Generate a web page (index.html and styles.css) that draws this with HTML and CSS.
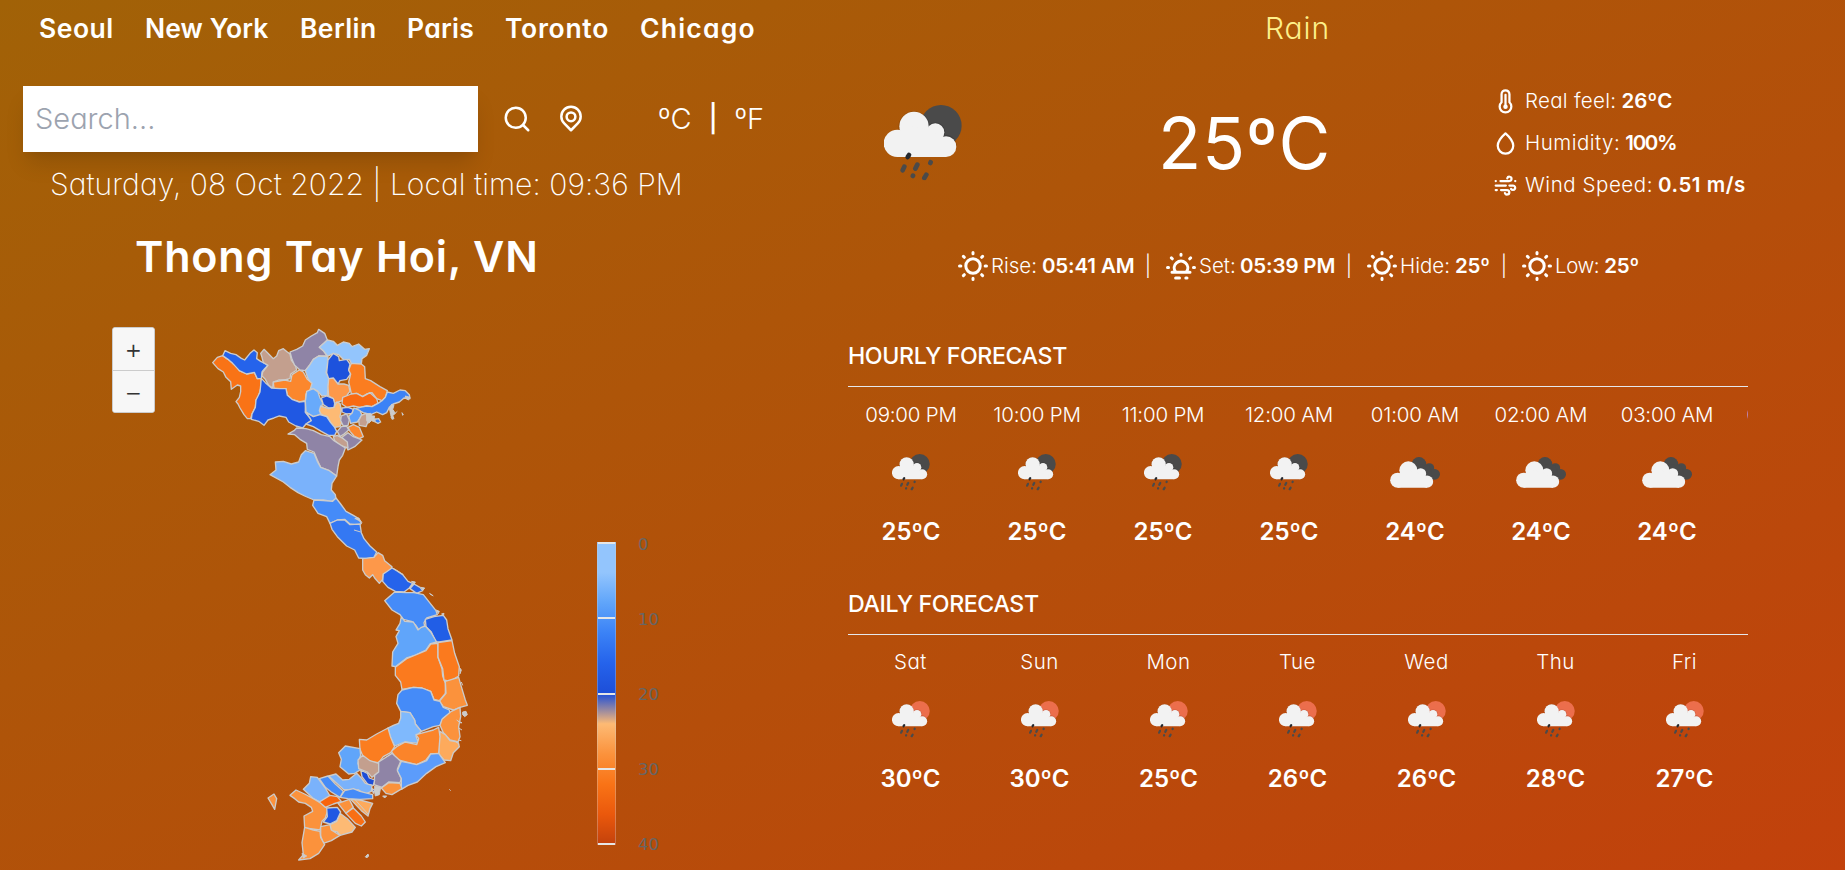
FILE: index.html
```html
<!DOCTYPE html>
<html lang="en">
<head>
<meta charset="utf-8">
<title>Weather</title>
<link rel="stylesheet" href="styles.css">
</head>
<body>
<svg class="defs" aria-hidden="true">
  <symbol id="rain" viewBox="132 76 234 226">
    <circle class="disc" cx="303" cy="138" r="62"/>
    <g class="cloud-edge"><circle cx="222" cy="142" r="47"/><circle cx="286" cy="158" r="30"/><path d="M286 232V185L318 165a35 35 0 0 1 33 35Z"/></g>
    <g class="cloud"><circle cx="172" cy="191" r="41"/><circle cx="222" cy="140" r="44"/><circle cx="286" cy="158" r="27"/><circle cx="318" cy="201" r="31"/><path d="M172 232V160l50-20 64 20 32 40v32Z"/></g>
    <g class="drops"><path d="M203 232l4-6" stroke="#26292e"/><path d="M188 272l5-11M226 267l6-12M218.500 289l.5-1M271 250l1-2M253 295l6-10"/></g>
  </symbol>
  <symbol id="clouds" viewBox="150 380 150 93">
    <g class="dark"><circle cx="237" cy="402" r="22"/><circle cx="268" cy="413" r="14.500"/><circle cx="284" cy="432" r="16"/><path d="M237 402l31 4 12 42h-20l-30-20Z"/></g>
    <g class="cloud"><circle cx="173" cy="449.500" r="22.500"/><circle cx="205" cy="420" r="27"/><circle cx="242" cy="430" r="16.500"/><circle cx="261" cy="454" r="18.500"/><path d="M173 472V435l32-15 37 10 19 24v18Z"/></g>
  </symbol>
  <symbol id="sun" viewBox="0 0 24 24"><g class="line"><circle cx="12" cy="12" r="4.800"/><path d="M12 3v.9M12 20.100v.9M3 12h.9M20.100 12h.9M5.600 5.600l.6.6M17.800 17.800l.6.6M5.600 18.400l.6-.6M17.800 6.200l.6-.6"/></g></symbol>
  <symbol id="sunset" viewBox="0 0 24 24"><g class="line"><path d="M12 4.100v.7M3 13h.7M20.300 13h.7M5.600 6.600l.6.6M18.400 6.600l-.6.6M6 16.200h12M8.300 15.800a4.500 4.500 0 1 1 7.400 0M8.400 20h2.600M15.200 20h.8"/></g></symbol>
</svg>

<main class="page">
  <section class="left">
    <nav class="cities">
      <a class="city seoul">Seoul</a><a class="city york">New York</a><a class="city berlin">Berlin</a><a class="city paris">Paris</a><a class="city toronto">Toronto</a><a class="city chicago">Chicago</a>
    </nav>
    <div class="search-row">
      <div class="search">Search...</div>
      <svg class="tool" viewBox="0 0 24 24"><g class="line"><circle cx="11" cy="11" r="8"/><path d="M17 17l4 4"/></g></svg>
      <svg class="tool" viewBox="0 0 24 24"><g class="line"><path d="M6.600 15.500a7.750 7.750 0 1 1 10.800 0L12 21Z"/><circle cx="12" cy="10.200" r="3.500"/></g></svg>
      <div class="units"><span>ºC</span><span class="bar">|</span><span>ºF</span></div>
    </div>
    <p class="date">Saturday, 08 Oct 2022 | Local time: 09:36 PM</p>
    <h1 class="place">Thong Tay Hoi, VN</h1>

    <div class="chart">
      <div class="zoom"><button>+</button><button>−</button></div>
      <svg class="map" viewBox="200 320 280 550">
        <g transform="translate(200 320) scale(.33333)">
          <path fill="#f97316" d="M38 128 52 112 68 107 84 118 98 130 112 140 118 152 140 162 163 157 172 176 184 175 182 205 176 228 168 240 166 262 156 282 152 296 142 296 132 284 120 264 114 252 108 245 118 232 122 215 122 198 112 195 94 208 92 185 78 172 70 156 54 146Z"/>
          <path fill="#2563eb" d="M68 107 75 92 92 100 108 104 124 115 134 120 150 100 162 90 172 98 170 116 182 124 198 132 204 136 194 146 186 156 184 175 172 176 163 157 140 162 118 152 98 130 84 118Z"/>
          <path fill="#c39f8e" d="M182 100 192 88 204 100 220 116 230 108 236 92 250 86 262 96 270 102 274 120 286 136 290 150 272 162 270 176 254 180 236 180 220 186 218 204 206 196 196 178 186 168 188 156 204 136 190 128 186 112Z"/>
          <path fill="#8f84a6" d="M270 96 290 88 308 78 316 60 334 48 352 38 356 28 374 40 382 60 372 70 358 82 370 92 382 108 356 108 340 118 330 134 316 152 300 150 284 136 276 118Z"/>
          <path fill="#93c5fd" d="M358 82 382 60 400 64 412 76 430 66 448 70 456 80 476 72 494 88 508 86 500 106 486 116 484 132 454 130 448 118 432 120 416 104 400 100 388 106 382 108 370 92Z"/>
          <path fill="#93c5fd" d="M316 152 330 134 340 118 356 108 384 110 382 140 378 158 388 176 384 200 382 226 366 228 352 212 330 206 334 190 324 176Z"/>
          <path fill="#1d52dd" d="M382 140 384 120 400 100 416 110 418 122 440 118 450 132 446 150 452 162 440 178 420 182 414 192 400 180 386 176 380 158Z"/>
          <path fill="#fb7d20" d="M454 130 484 132 494 140 496 176 512 182 540 200 562 212 556 232 546 242 530 236 516 218 500 222 488 230 470 220 454 222 450 202 446 186 452 162 446 150Z"/>
          <path fill="#fb872d" d="M220 186 254 180 272 184 276 164 298 150 310 156 322 178 336 190 330 210 318 222 316 242 298 246 276 238 262 226 258 206 240 206 222 206Z"/>
          <path fill="#fd984a" d="M386 176 400 174 414 192 432 192 446 196 450 214 442 224 436 240 420 244 404 250 400 236 386 228 384 200Z"/>
          <path fill="#f96a12" d="M428 232 454 222 470 220 488 230 510 218 530 236 534 250 516 260 500 258 480 262 460 258 440 262 426 252Z"/>
          <path fill="#3b82f6" d="M562 216 580 220 600 210 616 212 628 224 630 236 612 234 598 246 580 252 568 262 560 278 548 284 530 276 512 284 490 278 466 266 480 262 500 258 516 260 534 250 546 242 556 232Z"/>
          <path fill="#2058e3" d="M184 175 196 188 214 204 240 206 258 206 262 226 276 238 298 246 316 244 316 276 330 294 334 302 318 312 308 324 288 318 266 306 258 292 238 288 222 294 204 300 192 316 176 304 154 298 156 282 166 262 168 240 180 216Z"/>
          <path fill="#68aafb" d="M320 214 340 206 354 216 360 234 368 248 364 268 360 284 340 290 318 276 316 244Z"/>
          <path fill="#1d4ed8" d="M364 234 380 228 400 236 404 250 402 264 386 264 370 254Z"/>
          <path fill="#fdba74" d="M362 258 386 266 402 262 410 246 420 250 424 270 420 290 426 306 420 320 404 322 392 308 382 290 364 284 358 272Z"/>
          <path fill="#2563eb" d="M318 312 334 302 330 294 316 276 340 290 360 284 380 290 392 308 404 322 410 334 404 346 386 346 364 334 340 320Z"/>
          <path fill="#1d4ed8" d="M426 264 444 262 460 268 456 280 440 282 426 276Z"/>
          <path fill="#5c9ffb" d="M446 288 456 280 462 264 480 272 486 286 472 306 452 310Z"/>
          <path fill="#8f84a6" d="M424 288 440 282 448 300 444 316 430 318 422 302Z"/>
          <path fill="#c39f8e" d="M484 286 498 280 506 300 498 320 478 316 476 302Z"/>
          <path fill="#fb872d" d="M444 322 460 314 478 322 490 350 478 356 462 348 450 334Z"/>
          <path fill="#8f84a6" d="M412 334 424 320 440 318 446 330 432 342 420 350ZM426 352 444 338 460 350 486 360 464 380 444 390 436 370Z"/>
          <path fill="#c39f8e" d="M400 350 412 346 430 356 442 366 444 384 420 376 404 362Z"/>
          <path fill="#8f84a6" d="M264 342 282 332 290 324 318 326 340 332 364 344 390 350 402 362 436 384 428 406 418 420 414 440 410 468 388 452 362 442 352 420 342 396 322 388 320 370 300 358 284 344Z"/>
          <path class="isle" d="M500 282l12-2 4 8 8 0-2 8 10 2-6 8-12-4-8 8-6-8ZM568 264l8-12 6 4-4 12 8 12-8 6 4 10-6 2-4-14ZM606 278l4 6-2 2ZM616 228l14 4-4 8-8-4ZM572 292l20-18"/>
          <path fill="#3b82f6" d="M524 298l12-2 6 10-8 4-8-4Z"/>
        </g>
        <g transform="translate(250 440) scale(.33333)">
          <path fill="#7ab2fb" d="M60 104 78 90 76 66 100 64 124 72 146 66 154 44 166 32 192 40 202 64 212 82 238 92 260 108 246 130 244 150 256 164 258 178 244 184 220 180 192 180 164 168 144 158 120 142 100 126Z"/>
          <path fill="#458bf8" d="M192 180 220 182 248 184 258 174 272 192 288 214 310 226 326 236 334 250 328 256 300 252 284 238 262 240 240 250 230 230 204 220 188 196Z"/>
          <path fill="#3478f3" d="M240 250 262 240 284 240 300 254 330 252 334 278 342 296 360 318 380 336 372 352 350 356 326 354 314 330 290 318 262 290 246 268Z"/>
          <path fill="#fd984a" d="M338 356 372 352 384 338 398 346 404 362 426 380 420 396 400 402 398 418 388 430 374 414 368 404 358 414 346 404 338 390Z"/>
          <path fill="#2563eb" d="M398 424 400 402 426 384 440 392 458 404 474 424 488 430 478 444 462 456 436 454 414 442ZM480 446 492 432 510 442 518 452 500 460Z"/>
          <path fill="#458bf8" d="M404 482 434 456 470 458 492 458 520 464 536 484 558 512 562 524 530 534 522 548 524 560 508 572 496 554 484 544 460 538 450 524 426 510Z"/>
          <path class="isle" d="M312 270l20 6M314 236l12-2 10 14M428 384l32 20M484 424l12 2-4 8M512 442l12 2-6 8M540 462l10 6M558 510l10 4-4 8M574 522l8-2-2 8"/>
        </g>
        <g transform="translate(360 570) scale(.33333)">
          <path fill="#215ee6" d="M196 148 222 140 250 136 260 150 264 176 276 210 238 216 228 216 214 186 198 170Z"/>
          <path fill="#60a5fa" d="M124 140 134 154 160 156 174 180 184 172 196 168 212 186 230 216 210 222 198 240 166 256 140 264 106 290 96 288 98 246 114 220 108 200 118 182 108 180 120 160Z"/>
          <path fill="#fb7a1e" d="M106 292 140 266 198 242 212 222 234 220 234 262 246 296 248 318 256 340 256 370 238 392 222 388 212 364 186 354 160 352 126 358 122 336 106 316Z"/>
          <path fill="#fb7a1e" d="M234 218 276 212 284 250 298 290 296 318 270 334 252 330 248 296 234 262Z"/>
          <path fill="#fb923c" d="M256 334 296 322 304 350 316 390 322 406 300 412 280 420 250 410 238 394 258 370Z"/>
          <path fill="#458bf8" d="M126 360 160 352 186 354 212 364 222 390 240 394 250 412 268 420 270 430 250 444 240 466 220 470 184 484 166 462 164 450 150 428 122 424 110 400 114 374Z"/>
          <path fill="#fb923c" d="M274 424 300 412 302 440 296 470 300 500 294 516 270 510 250 488 240 466 246 448Z"/>
          <path fill="#7fb9fd" d="M122 424 150 428 164 450 166 462 184 484 168 498 176 520 154 518 134 516 104 528 90 500 84 474 100 466 116 460 122 444Z"/>
          <path fill="#fdaa5c" d="M240 484 256 494 270 512 294 516 298 530 280 548 272 572 252 570 236 552 236 520Z"/>
          <path class="isle" d="M208 70l10 6M298 292l6 8-4 12M304 336l4 10M308 426l10-2 4 10-8 6-6-6ZM294 454l12 4M296 474l10 6M288 516l10 6"/>
        </g>
        <g transform="translate(260 720) scale(.33333)">
          <path fill="#fb842a" d="M394 94 410 80 436 66 470 74 476 56 468 44 520 30 536 22 540 50 536 100 512 102 498 120 470 134 432 124 410 118Z"/>
          <path fill="#fb7d20" d="M298 58 320 60 350 42 384 24 392 52 404 80 392 98 370 110 356 128 334 126 310 112 300 88Z"/>
          <path fill="#60a5fa" d="M236 98 256 78 300 86 302 106 294 130 300 150 284 160 266 162 240 140 244 118Z"/>
          <path fill="#c39f8e" d="M294 120 308 106 330 122 356 130 356 156 336 172 322 156 296 146Z"/>
          <path fill="#8f84a6" d="M356 126 396 100 422 124 412 148 424 176 420 188 386 186 366 202 342 194 344 166 356 156Z"/>
          <path fill="#5c9cfb" d="M424 124 470 134 500 122 512 102 536 100 556 128 528 140 500 160 472 186 444 196 424 208 424 176 412 152Z"/>
          <path fill="#fb923c" d="M364 204 386 188 420 190 426 206 396 224 378 220Z"/>
          <path fill="#1d4ed8" d="M302 150 322 160 328 174 344 180 340 196 324 194 306 170ZM336 206 344 210 340 220Z"/>
          <path fill="#7ab2fb" d="M206 168 228 162 248 180 268 178 290 160 304 174 316 190 336 196 334 214 316 222 296 210 276 210 250 208 226 186Z"/>
          <path fill="#458bf8" d="M240 232 254 212 280 206 300 214 338 224 338 236 300 238 264 236Z"/>
          <path fill="#458bf8" d="M178 176 204 168 226 192 250 214 240 232 214 216 196 202Z"/>
          <path fill="#7ab2fb" d="M130 208 148 190 152 170 172 172 196 204 210 228 180 246 160 236 148 224Z"/>
          <path fill="#fb923c" d="M90 226 108 210 134 222 160 236 184 250 204 268 196 294 186 304 180 330 134 324 132 288 158 274 154 262 136 250 116 246 104 236Z"/>
          <path fill="#f9640c" d="M178 246 210 226 232 230 244 244 220 252 196 262Z"/>
          <path fill="#fb923c" d="M234 250 268 238 280 262 258 280Z"/>
          <path fill="#fdaa5c" d="M272 238 300 240 338 250 330 266 324 288 304 272Z"/>
          <path fill="#f96f15" d="M258 280 280 264 304 288 316 306 304 318 286 310Z"/>
          <path fill="#fdba74" d="M240 280 262 296 286 322 276 336 240 346 232 336 212 332 210 314 230 304Z"/>
          <path fill="#2058e3" d="M200 264 232 262 242 276 230 302 210 312 190 306 202 290Z"/>
          <path fill="#fb923c" d="M182 320 210 314 214 330 240 346 214 362 190 370 182 348Z"/>
          <path fill="#fb923c" d="M134 322 160 330 180 334 182 352 194 374 176 400 150 416 116 420 130 404 126 368Z"/>
          <path fill="#fb923c" d="M24 234 42 222 50 236 44 268 36 254Z"/>
          <path class="isle" d="M344 198l18 4-4 22-12 4-2-12ZM368 228l12 0-6 6ZM568 208l4 4M316 410l8-8 2 6-6 6ZM286 240l38 42M126 400l14 8-10 6ZM590 0l14 10M594 60l10 2"/>
        </g>
      </svg>
      <div class="legend">
        <div class="scale"><i></i><i></i><i></i><i></i><i></i></div>
        <div class="labels"><span>0</span><span>10</span><span>20</span><span>30</span><span>40</span></div>
      </div>
    </div>
  </section>

  <section class="right">
    <p class="condition">Rain</p>
    <div class="now">
      <div class="now-icon"><svg class="big"><use href="#rain"/></svg></div>
      <p class="temp">25ºC</p>
      <ul class="details">
        <li><svg class="mini" viewBox="0 0 24 24"><g class="line"><path d="M15.500 12.700V5.500a3.500 3.500 0 0 0-7 0v7.200a5.200 5.200 0 1 0 7 0Z"/><path d="M12 6v10"/><circle cx="12" cy="16.700" r="1"/></g></svg><span class="real">Real feel:</span><b class="real-v">26ºC</b></li>
        <li><svg class="mini" viewBox="0 0 24 24"><g class="line"><path d="M12 3S5.100 9 5.100 14.100a6.900 6.900 0 0 0 13.800 0C18.900 9 12 3 12 3Z"/></g></svg><span class="hum">Humidity:</span><b class="hum-v">100%</b></li>
        <li><svg class="mini" viewBox="0 0 24 24"><g class="line"><path d="M7.500 8h8a1.900 1.900 0 1 0-1.900-2.400M3.300 8h.1M20.600 8h.1M3.300 12h9M15.500 12h3.200a2 2 0 1 1-1.800 3M3.300 16h1M8 16h5.400a2 2 0 1 1-1.900 2.700"/></g></svg><span class="wind">Wind Speed:</span><b class="wind-v">0.51 m/s</b></li>
      </ul>
    </div>
    <div class="sunline">
      <svg><use href="#sun"/></svg><span class="w-rise">Rise:</span><b class="w-time">05:41 AM</b><em>|</em>
      <svg><use href="#sunset"/></svg><span class="w-set">Set:</span><b class="w-time2">05:39 PM</b><em>|</em>
      <svg><use href="#sun"/></svg><span class="w-hide">Hide:</span><b class="w-deg">25º</b><em>|</em>
      <svg><use href="#sun"/></svg><span class="w-low">Low:</span><b>25º</b>
    </div>

    <h2>HOURLY FORECAST</h2>
    <div class="hours">
      <div class="slot"><span>09:00 PM</span><svg class="small"><use href="#rain"/></svg><b>25ºC</b></div>
      <div class="slot"><span>10:00 PM</span><svg class="small"><use href="#rain"/></svg><b>25ºC</b></div>
      <div class="slot"><span>11:00 PM</span><svg class="small"><use href="#rain"/></svg><b>25ºC</b></div>
      <div class="slot"><span>12:00 AM</span><svg class="small"><use href="#rain"/></svg><b>25ºC</b></div>
      <div class="slot"><span>01:00 AM</span><svg class="overcast"><use href="#clouds"/></svg><b>24ºC</b></div>
      <div class="slot"><span>02:00 AM</span><svg class="overcast"><use href="#clouds"/></svg><b>24ºC</b></div>
      <div class="slot"><span>03:00 AM</span><svg class="overcast"><use href="#clouds"/></svg><b>24ºC</b></div>
      <div class="slot"><span>04:00 AM</span></div>
    </div>
    <h2 class="second">DAILY FORECAST</h2>
    <div class="days">
      <div class="slot"><span>Sat</span><svg class="small"><use href="#rain"/></svg><b>30ºC</b></div>
      <div class="slot"><span>Sun</span><svg class="small"><use href="#rain"/></svg><b>30ºC</b></div>
      <div class="slot"><span>Mon</span><svg class="small"><use href="#rain"/></svg><b>25ºC</b></div>
      <div class="slot"><span>Tue</span><svg class="small"><use href="#rain"/></svg><b>26ºC</b></div>
      <div class="slot"><span>Wed</span><svg class="small"><use href="#rain"/></svg><b>26ºC</b></div>
      <div class="slot"><span>Thu</span><svg class="small"><use href="#rain"/></svg><b>28ºC</b></div>
      <div class="slot"><span>Fri</span><svg class="small"><use href="#rain"/></svg><b>27ºC</b></div>
    </div>
  </section>
</main>
</body>
</html>
```
FILE: styles.css
```css
* { box-sizing: border-box; margin: 0; padding: 0; }
body {
  height: 870px;
  overflow: hidden;
  background: linear-gradient(to bottom right, #a16207, #c2410c);
  color: #fff;
  font: 330 20.5px/30px Inter, "Noto Sans", sans-serif;
  font-feature-settings: "cv11";
  white-space: nowrap;
}
b { font-weight: 570; }
svg { flex: none; display: block; }
.defs { width: 0; height: 0; position: absolute; }
.line { fill: none; stroke: currentColor; stroke-width: 2; stroke-linecap: round; stroke-linejoin: round; }
.cloud { fill: #f2f2f2; }
.cloud-edge { fill: #000; opacity: .13; }
.dark { fill: #4a4a4a; }
.disc { fill: var(--disc, #4a4a4a); }
.drops { stroke: #4a4a4a; stroke-width: 14; stroke-linecap: round; fill: none; }

.page { display: flex; height: 870px; }
.left { width: 848px; }
.right { width: 900px; }

/* left column */
.cities {
  display: grid;
  grid-template-columns: 106px 155px 107px 98px 135px auto;
  padding: 10px 0 0 39px;
  font-size: 26.5px;
  font-weight: 570;
  line-height: 36px;
}
.seoul { letter-spacing: .5px; }
.york { letter-spacing: .1px; }
.berlin { letter-spacing: .4px; }
.paris { letter-spacing: .3px; }
.toronto { letter-spacing: .7px; }
.chicago { letter-spacing: 1.2px; }

.search-row { display: flex; align-items: center; height: 66px; margin-top: 40px; padding-left: 23px; }
.search {
  width: 455px;
  height: 66px;
  padding-left: 12px;
  background: #fff;
  color: #9ca3af;
  font-size: 29px;
  line-height: 65px;
  box-shadow: 0 15px 22px -4px rgba(0, 0, 0, .13), 0 6px 9px -6px rgba(0, 0, 0, .1);
}
.tool { width: 30px; height: 30px; margin-left: 24px; }
.tool + .tool { margin-left: 24px; }
.units { display: flex; font-size: 29px; line-height: 40px; margin-left: 72px; }
.units .bar { width: 43px; text-align: center; font-weight: 500; font-size: 27px; }

.date { margin-top: 11px; padding-left: 50px; height: 42px; font-size: 30px; line-height: 42px; font-weight: 250; letter-spacing: .05px; }
.place { margin-top: 21px; padding-left: 135px; font-size: 43px; line-height: 60px; font-weight: 560; letter-spacing: .8px; }

.chart { display: flex; align-items: flex-start; margin-top: 34px; }
.zoom { margin: 7px 0 0 112px; width: 43px; height: 86px; border: 1px solid #ccc; border-radius: 3px; background: #f7f7f7; overflow: hidden; }
.zoom button { display: block; width: 41px; height: 42px; border: 0; background: #f7f7f7; color: #333; font: 20px/44px "DejaVu Sans", sans-serif; }
.zoom button + button { border-top: 1px solid #ccc; }
.map { width: 280px; height: 550px; margin-left: 45px; }
.map path { stroke: #ccc; stroke-width: 4; stroke-linejoin: round; }
.map .isle { fill: #ccc; stroke-width: 3; }
.legend { display: flex; margin: 222px 0 0 117px; }
.scale {
  width: 19px;
  height: 303px;
  display: flex;
  flex-direction: column;
  justify-content: space-between;
  border: solid rgba(204, 204, 204, .35);
  border-width: 0 1px;
  background: linear-gradient(#93c5fd 10%, #60a5fa 20%, #3b82f6 30%, #2563eb 40%, #1d4ed8 50%, #fdba74 60%, #fb923c 70%, #f97316 80%, #ea580c 90%, #c2410c);
}
.scale i { height: 2px; background: #e6e6e6; }
.labels { display: flex; flex-direction: column; justify-content: space-between; height: 318px; margin: -6px 0 0 22px; color: #666; font: 16.500px/18px "DejaVu Sans", sans-serif; }

/* right column */
.condition { width: 482px; margin-top: 10px; text-align: right; color: #fef08a; font-size: 30px; line-height: 36px; letter-spacing: .9px; }
.now { display: flex; justify-content: space-between; align-items: center; height: 126px; margin-top: 34px; }
.now-icon { width: 150px; padding-left: 36px; }
.big { width: 78px; height: 75.3px; }
.temp { font-size: 71px; line-height: 80px; font-weight: 400; letter-spacing: .7px; margin-right: 3px; }
.details { list-style: none; width: 254px; }
.details li { display: flex; align-items: center; height: 42px; }
.mini { width: 27px; height: 27px; margin-left: -2px; }
.details span { margin-left: 6px; }
.details b { margin-left: 5px; }
.real { letter-spacing: .3px; }
.real-v { letter-spacing: .1px; }
.hum { letter-spacing: .5px; }
.hum-v { letter-spacing: -1.3px; }
.wind { letter-spacing: .55px; }
.wind-v { letter-spacing: .55px; }

.sunline { display: flex; align-items: center; height: 36px; margin-top: 42px; padding-left: 107px; }
.sunline svg { width: 36px; height: 36px; }
.sunline b { margin-left: 5px; letter-spacing: -.15px; }
.sunline em { width: 30px; text-align: center; font-style: normal; }
.w-rise { width: 46px; }
.w-time { width: 91px; }
.w-set { width: 36px; }
.w-time2 { width: 94px; }
.w-hide { width: 50px; }
.w-deg { width: 34px; }
.w-low { letter-spacing: -.4px; }

h2 { margin-top: 57px; height: 46px; border-bottom: 1px solid #e5e7eb; font-size: 23.200px; line-height: 30px; font-weight: 540; letter-spacing: -.4px; }
h2.second { margin-top: 43px; }
.hours, .days { display: flex; overflow: hidden; height: 159px; }
.slot { flex: none; width: 126px; display: flex; flex-direction: column; align-items: center; }
.days { --disc: #ec6e4c; }
.days .slot { width: 129px; }
.days .slot:first-child { margin-left: -2px; }
.slot span { margin-top: 13px; line-height: 30px; letter-spacing: -.2px; }
.days .slot span { margin-top: 12px; letter-spacing: .5px; }
.slot b { font-size: 24px; line-height: 36px; }
.small { width: 38px; height: 36.500px; margin: 24px 0 23.500px; }
.overcast { width: 50px; height: 31px; margin: 27px 0 26px; }
```
